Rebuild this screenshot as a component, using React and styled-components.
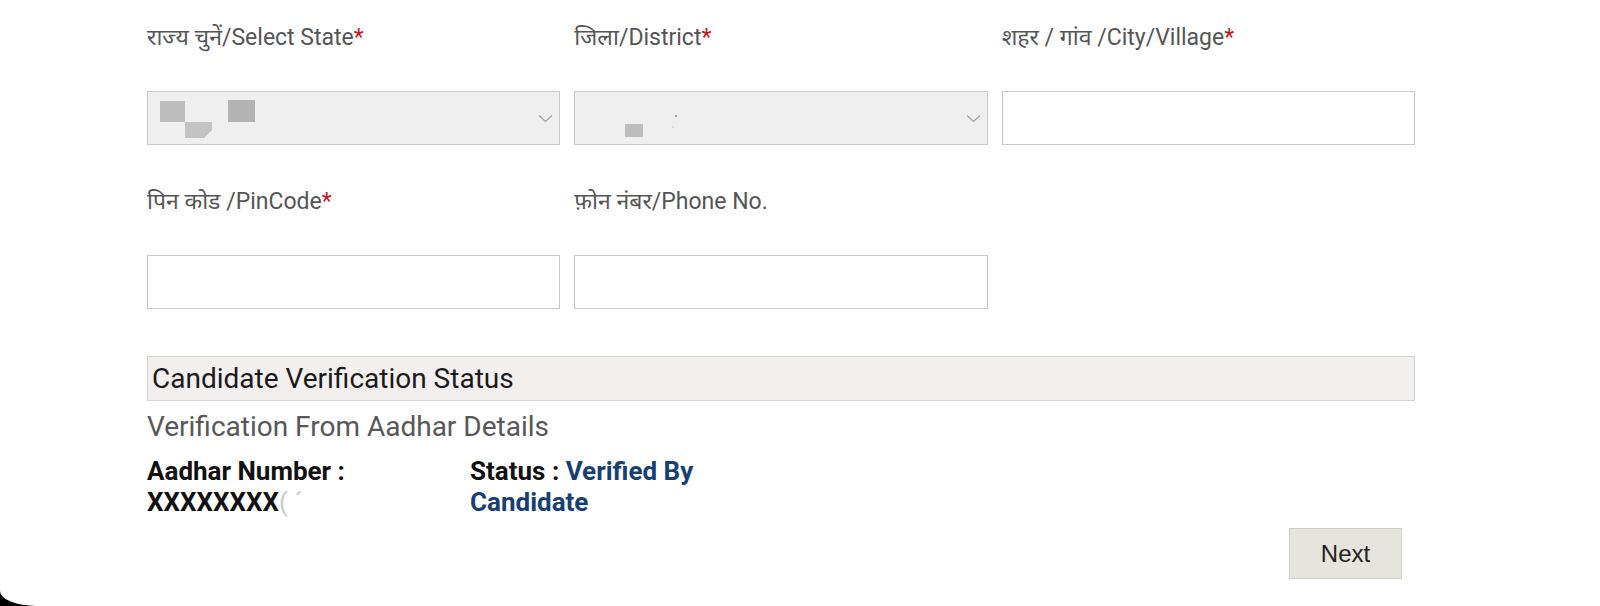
import React from 'react';
import styled, { createGlobalStyle } from 'styled-components';

const GlobalStyle = createGlobalStyle`
  html, body {
    margin: 0;
    padding: 0;
    background: #000;
  }
  body {
    font-family: Roboto, "Noto Sans", "Liberation Sans", sans-serif;
  }
`;

const Screen = styled.div`
  background: #fff;
  height: 606px;
  overflow: hidden;
  border-bottom-left-radius: 36px 15px;
`;

const Form = styled.div`
  width: 1268px;
  padding: 23px 0 0 147px;
`;

const FieldGrid = styled.div`
  display: grid;
  grid-template-columns: repeat(3, 1fr);
  column-gap: 14px;
  row-gap: 42px;
`;

const Field = styled.div`
  display: flex;
  flex-direction: column;
  gap: 38px;
`;

const Label = styled.label`
  font-size: 23px;
  line-height: 30px;
  color: #555;
  white-space: nowrap;
`;

const Required = styled.span`
  color: #c4161c;
`;

const Control = styled.div`
  height: 54px;
  box-sizing: border-box;
  border: 1px solid #c8c8c8;
  background: ${props => (props.disabled ? '#efefef' : '#fff')};
  display: flex;
  align-items: stretch;
  padding-right: 6px;
`;

const Blur = styled.svg`
  flex: none;
  display: block;
`;

const Chevron = styled.svg`
  margin-left: auto;
  align-self: center;
  flex: none;
`;

const SectionHeader = styled.div`
  margin-top: 47px;
  height: 45px;
  box-sizing: border-box;
  border: 1px solid #d6d3d3;
  background: #f4efef;
  display: flex;
  align-items: center;
  padding-left: 4px;
  font-size: 28px;
  color: #1a1a1a;
`;

const SubTitle = styled.div`
  margin-top: 10px;
  font-size: 28px;
  line-height: 32px;
  color: #575757;
`;

const DetailRow = styled.div`
  margin-top: 13px;
  display: grid;
  grid-template-columns: 323px 260px;
`;

const Detail = styled.div`
  font-size: 26px;
  line-height: 31px;
  font-weight: 700;
  color: #111;
`;

const Value = styled.span`
  color: #173f75;
`;

const Faded = styled.span`
  color: #c9c9c9;
  font-weight: 400;
`;

const Actions = styled.div`
  display: flex;
  justify-content: flex-end;
  padding-right: 13px;
  margin-top: 10px;
`;

const Button = styled.button`
  width: 113px;
  height: 51px;
  border: 1px solid #cfcfc8;
  background: #e6e5dd;
  font-family: "Liberation Sans", Arial, sans-serif;
  font-size: 24px;
  color: #222;
  cursor: pointer;
`;

const ChevronDown = () => (
  <Chevron width="15" height="9" viewBox="0 0 15 9">
    <polyline points="1,1.5 7.5,7.5 14,1.5" fill="none" stroke="#a0a0a0" strokeWidth="1.2" />
  </Chevron>
);

// blurred-out selected values, as in the screenshot
const StateBlur = () => (
  <Blur width="120" height="52" viewBox="0 0 120 52">
    <path d="M12 9 H37 V30 H12 Z" fill="#bdbdbd" />
    <path d="M37 30 H64 V38 L56 46 H37 Z" fill="#c3c3c3" />
    <rect x="80" y="8" width="27" height="22" fill="#b3b3b3" />
  </Blur>
);

const DistrictBlur = () => (
  <Blur width="120" height="52" viewBox="0 0 120 52">
    <rect x="50" y="32" width="18" height="13" fill="#bdbdbd" />
    <circle cx="101" cy="24" r="1" fill="#8a8a8a" />
    <circle cx="98" cy="35" r="0.7" fill="#b0b0b0" />
  </Blur>
);

const fields = [
  { hi: 'राज्य चुनें', en: 'Select State', required: true, kind: 'select', blur: <StateBlur /> },
  { hi: 'जिला', en: 'District', required: true, kind: 'select', blur: <DistrictBlur /> },
  { hi: 'शहर / गांव ', en: 'City/Village', required: true },
  { hi: 'पिन कोड ', en: 'PinCode', required: true },
  { hi: 'फ़ोन नंबर', en: 'Phone No.' }
];

export default function App() {
  return (
    <Screen>
      <GlobalStyle />
      <Form>
        <FieldGrid>
          {fields.map(field => (
            <Field key={field.en}>
              <Label>
                {field.hi}/{field.en}
                {field.required && <Required>*</Required>}
              </Label>
              {field.kind === 'select' ? (
                <Control disabled>
                  {field.blur}
                  <ChevronDown />
                </Control>
              ) : (
                <Control />
              )}
            </Field>
          ))}
        </FieldGrid>

        <SectionHeader>Candidate Verification Status</SectionHeader>
        <SubTitle>Verification From Aadhar Details</SubTitle>
        <DetailRow>
          <Detail>
            Aadhar Number :<br />
            XXXXXXXX<Faded>( ´</Faded>
          </Detail>
          <Detail>
            Status : <Value>Verified By</Value>
            <br />
            <Value>Candidate</Value>
          </Detail>
        </DetailRow>

        <Actions>
          <Button type="button">Next</Button>
        </Actions>
      </Form>
    </Screen>
  );
}
